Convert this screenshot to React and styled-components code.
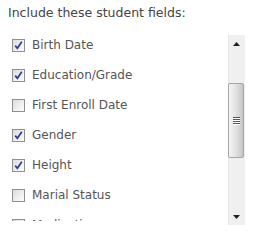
import React from 'react';
import styled, { createGlobalStyle } from 'styled-components';

const GlobalStyle = createGlobalStyle`
  html, body {
    margin: 0;
    padding: 0;
    background: #ffffff;
  }
  body {
    font-family: "DejaVu Sans", Verdana, sans-serif;
    color: #4d4d4d;
  }
`;

const Page = styled.div`
  width: 260px;
  height: 239px;
  padding: 5px 0 0 8px;
  box-sizing: border-box;
  overflow: hidden;
`;

const Title = styled.div`
  font-size: 12.5px;
  line-height: 15px;
  color: #444;
  white-space: nowrap;
`;

const Frame = styled.div`
  display: flex;
  align-items: flex-start;
  width: 237px;
  margin-top: 10px;
`;

const List = styled.div`
  flex: 1;
  height: 191px;
  overflow: hidden;
  padding-left: 4px;
  box-sizing: border-box;
`;

const Row = styled.label`
  display: flex;
  align-items: center;
  gap: 7px;
  height: 30px;
  font-size: 12px;
  color: #555;
  white-space: nowrap;
`;

const Box = styled.span`
  display: flex;
  align-items: center;
  justify-content: center;
  width: 11px;
  height: 11px;
  border: 1px solid #8e8f8f;
  background: linear-gradient(135deg, #dcdcdc 0%, #f4f4f4 70%, #fdfdfd 100%);
  flex-shrink: 0;
`;

const Scrollbar = styled.div`
  display: flex;
  flex-direction: column;
  width: 17px;
  height: 190px;
  margin-top: 5px;
  background: #f0f0f0;
  box-shadow: inset 1px 0 0 #e6e6e6;
`;

const Arrow = styled.div`
  height: 17px;
  display: flex;
  align-items: center;
  justify-content: center;
  flex-shrink: 0;
`;

const Track = styled.div`
  flex: 1;
  display: flex;
  flex-direction: column;
`;

const Thumb = styled.div`
  margin-top: ${(p) => p.offset}px;
  height: ${(p) => p.size}px;
  width: 16px;
  box-sizing: border-box;
  border: 1px solid #a7a7a7;
  border-radius: 2px;
  background: linear-gradient(90deg, #f3f3f3 0%, #e6e6e6 40%, #d2d2d2 80%, #c4c4c4 100%);
  display: flex;
  align-items: center;
  justify-content: center;
`;

const Grip = styled.div`
  display: flex;
  flex-direction: column;
  gap: 1px;
`;

const GripLine = styled.span`
  width: 7px;
  height: 1px;
  background: #5a5a5a;
  box-shadow: 0 1px 0 #fff;
`;

const fields = [
  ['Birth Date', true],
  ['Education/Grade', true],
  ['First Enroll Date', false],
  ['Gender', true],
  ['Height', true],
  ['Marial Status', false],
  ['Medication', true],
  ['Race', false],
];

function Check({ checked }) {
  return (
    <Box>
      {checked && (
        <svg width="9" height="9" viewBox="0 0 9 9">
          <path d="M1.2 4.6 L3.4 7.3 L7.8 0.8" fill="none" stroke="#2b3d94" strokeWidth="1.7" />
        </svg>
      )}
    </Box>
  );
}

export default function App() {
  return (
    <>
      <GlobalStyle />
      <Page>
        <Title>Include these student fields:</Title>
        <Frame>
          <List>
            {fields.map(([name, checked]) => (
              <Row key={name}>
                <Check checked={checked} />
                {name}
              </Row>
            ))}
          </List>
          <Scrollbar>
            <Arrow>
              <svg width="7" height="4" viewBox="0 0 7 4">
                <path d="M3.5 0 L7 4 L0 4 Z" fill="#222" />
              </svg>
            </Arrow>
            <Track>
              <Thumb offset={31} size={75}>
                <Grip>
                  <GripLine />
                  <GripLine />
                  <GripLine />
                  <GripLine />
                </Grip>
              </Thumb>
            </Track>
            <Arrow>
              <svg width="7" height="4" viewBox="0 0 7 4">
                <path d="M0 0 L7 0 L3.5 4 Z" fill="#222" />
              </svg>
            </Arrow>
          </Scrollbar>
        </Frame>
      </Page>
    </>
  );
}
